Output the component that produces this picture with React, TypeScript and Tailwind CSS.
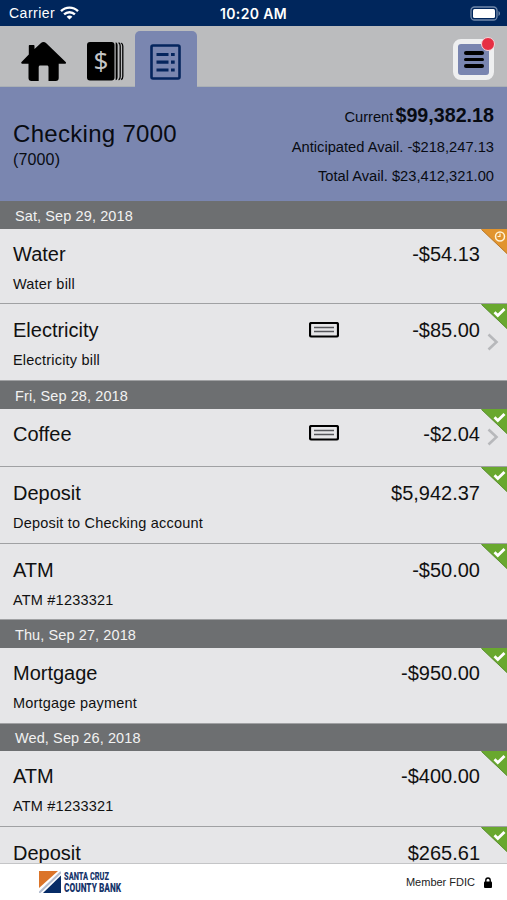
import clsx from "clsx";

type Status = "pending" | "cleared";

interface Transaction {
  title: string;
  description?: string;
  amount: string;
  status: Status;
  hasCheck?: boolean;
  height: string;
}

interface Day {
  date: string;
  height: string;
  transactions: Transaction[];
}

const DAYS: Day[] = [
  {
    date: "Sat, Sep 29, 2018",
    height: "h-7",
    transactions: [
      { title: "Water", description: "Water bill", amount: "-$54.13", status: "pending", height: "h-[75px]" },
      {
        title: "Electricity",
        description: "Electricity bill",
        amount: "-$85.00",
        status: "cleared",
        hasCheck: true,
        height: "h-[77px]",
      },
    ],
  },
  {
    date: "Fri, Sep 28, 2018",
    height: "h-7",
    transactions: [
      { title: "Coffee", amount: "-$2.04", status: "cleared", hasCheck: true, height: "h-[58px]" },
      {
        title: "Deposit",
        description: "Deposit to Checking account",
        amount: "$5,942.37",
        status: "cleared",
        height: "h-[77px]",
      },
      { title: "ATM", description: "ATM #1233321", amount: "-$50.00", status: "cleared", height: "h-[76px]" },
    ],
  },
  {
    date: "Thu, Sep 27, 2018",
    height: "h-7",
    transactions: [
      { title: "Mortgage", description: "Mortgage payment", amount: "-$950.00", status: "cleared", height: "h-[76px]" },
    ],
  },
  {
    date: "Wed, Sep 26, 2018",
    height: "h-[27px]",
    transactions: [
      { title: "ATM", description: "ATM #1233321", amount: "-$400.00", status: "cleared", height: "h-[76px]" },
      { title: "Deposit", amount: "$265.61", status: "cleared", height: "h-[76px]" },
    ],
  },
];

function StatusBar() {
  return (
    <div className="flex h-[26px] shrink-0 items-center bg-[#00265c] px-[9px] text-white">
      <div className="flex flex-1 items-center gap-[5px]">
        <span className="text-[14px] leading-[26px] tracking-[0.5px]">Carrier</span>
        <svg width="19" height="14" viewBox="0 0 19 14" fill="none" stroke="currentColor" strokeWidth="2.4">
          <path d="M1 5.2C5.8.4 13.2.4 18 5.2" />
          <path d="M4.1 8.4C7.1 5.5 11.9 5.5 14.9 8.4" />
          <path d="M9.5 13.6 6.6 10.7C8.2 9.2 10.8 9.2 12.4 10.7Z" fill="currentColor" stroke="none" />
        </svg>
      </div>
      <span className="pt-px font-[Inter,sans-serif] text-[14px] font-semibold tracking-[0.35px]">10:20 AM</span>
      <div className="flex flex-1 justify-end">
        <svg className="-mr-[3px]" width="31" height="15" viewBox="0 0 31 15" fill="none">
          <rect x="1" y="1" width="26" height="13" rx="3.5" stroke="#7189aa" strokeWidth="1.3" />
          <rect x="3" y="3" width="22" height="9" rx="1.5" fill="#fff" />
          <path d="M28.5 5v5c2-1 2-4 0-5Z" fill="#7189aa" />
        </svg>
      </div>
    </div>
  );
}

function HomeIcon() {
  return (
    <svg width="45" height="39" viewBox="0 0 45 39" fill="#000">
      <path d="M22.5 0c-1 0-1.8.5-2.5 1.1L13.5 7V4c0-.7-.4-1-1-1H8.8c-.7 0-1 .3-1 1v8.500L.5 20c-.6.7-.4 1.700.5 1.700h6.500V36c0 2 1 3 3 3h7.200V25.300c0-1.200.5-1.800 1.700-1.800h6.400c1.200 0 1.700.6 1.700 1.800V39h7.200c2 0 3-1 3-3V21.700h6.500c.9 0 1.200-1 .5-1.700L25 1.100C24.300.5 23.500 0 22.500 0Z" />
    </svg>
  );
}

function AccountsIcon() {
  return (
    <svg width="37" height="39" viewBox="0 0 37 39">
      <rect x="0" y="0" width="27.500" height="38.500" rx="3" fill="#000" />
      <path d="M28.700.3c1.500.5 1.900 1.500 1.900 3.500v31c0 2-.4 3-1.900 3.500Z" fill="#000" />
      <path d="M31.600.6c1.200.5 1.600 1.500 1.600 3.400v30.500c0 1.900-.4 2.900-1.600 3.400M34.200 1c1.200.5 1.600 1.500 1.600 3.300v30c0 1.800-.4 2.800-1.600 3.300" fill="none" stroke="#000" strokeWidth="1.300" />
      <text x="14" y="28" textAnchor="middle" className="font-['Noto_Sans',sans-serif]" fontSize="26" fill="#c4c5c7">
        $
      </text>
    </svg>
  );
}

function RegisterIcon() {
  return (
    <svg className="mr-[2px]" width="31" height="36" viewBox="0 0 31 36" fill="none" stroke="#05255d">
      <rect x="1.500" y="1.500" width="28" height="33" rx="1.500" strokeWidth="2.600" />
      <path d="M6.500 10.500h12M6.500 18.200h12M6.500 26h12M21 10.500h3.700M21 18.200h3.700M21 26h3.700" strokeWidth="3.200" />
    </svg>
  );
}

function TabBar() {
  return (
    <div className="flex h-[61px] shrink-0 items-start border-b border-[#aab0b5] bg-[#bbbcbe]">
      <button className="mt-4 ml-[21px]">
        <HomeIcon />
      </button>
      <button className="mt-4 ml-[21px]">
        <AccountsIcon />
      </button>
      <button className="mt-[5px] ml-[11px] flex h-14 w-[62px] items-start justify-center rounded-t-[5px] bg-[#7a86b0] pt-[13px]">
        <RegisterIcon />
      </button>
      <button className="relative mt-[13px] mr-[13px] ml-auto flex h-[41px] w-[41px] items-center justify-center rounded-[8px] border-[5px] border-[#eeeff0] bg-[#7985b0]">
        <span className="flex flex-col gap-[3px]">
          <span className="h-[3.500px] w-5 rounded-full bg-black" />
          <span className="h-[3.500px] w-5 rounded-full bg-black" />
          <span className="h-[3.500px] w-5 rounded-full bg-black" />
        </span>
        <span className="absolute -top-[7px] -right-[6px] h-[14px] w-[14px] rounded-full border border-[#f3d5da] bg-[#e62e43]" />
      </button>
    </div>
  );
}

function AccountSummary() {
  return (
    <div className="flex h-[114px] shrink-0 justify-between bg-[#7a86b0] pr-[13px] pl-[13px] text-[#080b12]">
      <div className="pt-[32px]">
        <h1 className="text-[24px] leading-[30px] tracking-[0.3px]">Checking 7000</h1>
        <p className="text-[16px] leading-[22px] tracking-[0.15px]">(7000)</p>
      </div>
      <div className="pt-[13px] text-right text-[14.700px] leading-[30px]">
        <p>
          Current <span className="-ml-[2px] text-[19.700px] font-bold">$99,382.18</span>
        </p>
        <p>Anticipated Avail. -$218,247.13</p>
        <p className="-mt-px">Total Avail. $23,412,321.00</p>
      </div>
    </div>
  );
}

function StatusCorner({ status }: { status: Status }) {
  const isPending = status === "pending";

  return (
    <svg className="absolute top-0 right-0" width="26" height="25" viewBox="0 0 26 25" fill="none">
      <path d="M0 0H26V25Z" fill={isPending ? "#e1942e" : "#69a82f"} />
      <path d="M.5.5 26 24.500" stroke={isPending ? "#b97a2c" : "#5c8f35"} />
      {isPending ? (
        <>
          <circle cx="19" cy="7.500" r="4.500" stroke="#fff3d8" strokeWidth="1.500" />
          <path d="M19 4.500v3h-2.500" stroke="#fff3d8" strokeWidth="1.200" />
        </>
      ) : (
        <path d="m13.500 8.300 3.300 3.300L23.500 5" stroke="#fff" strokeWidth="2.800" />
      )}
    </svg>
  );
}

function CheckImageIcon() {
  return (
    <svg width="30" height="16" viewBox="0 0 30 16" fill="none">
      <rect x="1" y="1" width="28" height="13.500" rx="1.500" stroke="#000" strokeWidth="2.200" />
      <path d="M5 5.500h20M5 9.500h20" stroke="#55565a" strokeWidth="1.300" />
    </svg>
  );
}

function TransactionRow({ transaction, isFirst }: { transaction: Transaction; isFirst: boolean }) {
  const { title, description, amount, status, hasCheck, height } = transaction;

  return (
    <div
      className={clsx(
        "relative flex shrink-0 border-b border-[#a0a1a3] bg-[#e6e6e8] pr-[27px] pl-[13px] text-[#111]",
        isFirst ? "pt-[10px]" : "pt-[11px]",
        height,
      )}
    >
      <div className="flex-1">
        <p className="text-[20px] leading-[30px]">{title}</p>
        {description && <p className="text-[14.500px] leading-[30px] tracking-[0.2px]">{description}</p>}
      </div>
      {hasCheck && (
        <div className={description ? "pt-[7px]" : "pt-[6px]"}>
          <CheckImageIcon />
        </div>
      )}
      <p className="w-[141px] text-right text-[20px] leading-[30px]">{amount}</p>
      <StatusCorner status={status} />
      {hasCheck && (
        <svg
          className={clsx("absolute right-[8px]", description ? "top-[29px]" : "top-[19px]")}
          width="12"
          height="18"
          viewBox="0 0 12 18"
          fill="none"
          stroke="#b7b8bb"
          strokeWidth="2.600"
        >
          <path d="m1.500 1.500 8 7.500-8 7.500" />
        </svg>
      )}
    </div>
  );
}

function BankLogo() {
  return (
    <div className="flex items-start gap-[3px]">
      <svg className="mt-px" width="22" height="22" viewBox="0 0 22 22">
        <path d="M0 0H19L0 17Z" fill="#db7429" />
        <path d="M22 4.500V22H4Z" fill="#062b66" />
        <path d="M0 22 22 1" stroke="#b3bdd0" strokeWidth="2" />
      </svg>
      <svg
        className="overflow-visible font-[Roboto,sans-serif] font-black"
        width="60"
        height="25"
        viewBox="0 0 60 25"
        fill="#17356b"
      >
        <text x="0" y="9.500" fontSize="11.500" textLength="45" lengthAdjust="spacingAndGlyphs">
          SANTA CRUZ
        </text>
        <text x="0" y="21.500" fontSize="13" textLength="57" lengthAdjust="spacingAndGlyphs">
          COUNTY BANK
        </text>
      </svg>
    </div>
  );
}

function Footer() {
  return (
    <div className="flex h-9 shrink-0 items-start justify-between bg-white pt-[6px] pr-[15px] pl-[39px]">
      <BankLogo />
      <div className="flex items-center gap-[9px] pt-[2px]">
        <span className="text-[11px] leading-5 text-[#222]">Member FDIC</span>
        <svg width="8" height="11" viewBox="0 0 8 11">
          <path d="M1.800 5V3.200a2.200 2.200 0 0 1 4.400 0V5" fill="none" stroke="#000" strokeWidth="1.400" />
          <rect y="4.500" width="8" height="6.500" rx="1" fill="#000" />
        </svg>
      </div>
    </div>
  );
}

export default function App() {
  return (
    <div className="flex h-[900px] w-[507px] flex-col overflow-hidden bg-white font-['Liberation_Sans',Arial,sans-serif]">
      <StatusBar />
      <TabBar />
      <AccountSummary />
      <div className="flex min-h-0 flex-1 flex-col overflow-hidden border-b border-[#c4c5c7]">
        {DAYS.map((day) => (
          <section key={day.date} className="shrink-0">
            <h2
              className={clsx(
                "flex items-center bg-[#6d6f71] pt-[3px] pl-[15px] text-[14.500px] tracking-[0.1px] text-[#f2f2f2]",
                day.height,
              )}
            >
              {day.date}
            </h2>
            {day.transactions.map((transaction, index) => (
              <TransactionRow key={index} transaction={transaction} isFirst={index === 0} />
            ))}
          </section>
        ))}
      </div>
      <Footer />
    </div>
  );
}
